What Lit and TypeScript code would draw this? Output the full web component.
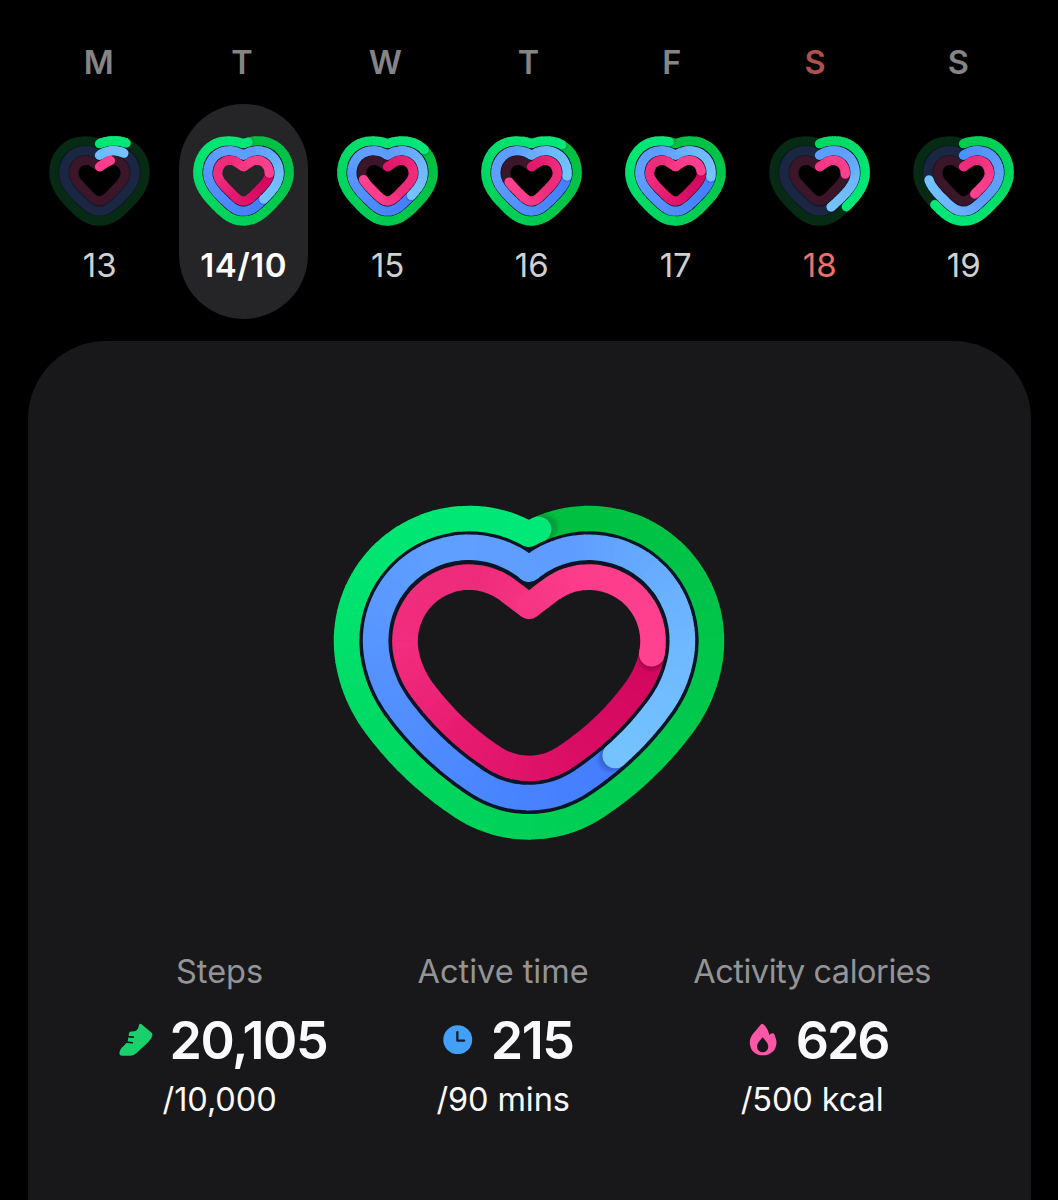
import { LitElement, html, css, svg } from "lit";
import { customElement, property } from "lit/decorators.js";
import { classMap } from "lit/directives/class-map.js";

type Rgb = [number, number, number];
interface Ring { head: number; lapped: boolean; }
interface Day { letter: string; date: string; rings: Ring[]; selected?: boolean; sunday?: boolean; }

const hex = (h: string): Rgb => [0, 2, 4].map((i) => parseInt(h.substr(i, 2), 16)) as Rgb;

/* colour stops from the tail of a lap to its head: steps, active time, calories */
const RAMPS: Rgb[][] = [
  ["00bf3f", "00c348", "00ca4e", "00d158", "00da64", "00e572", "00e878"].map(hex),
  ["447cff", "4a86ff", "5592ff", "5f9fff", "5e9dff", "6eb7ff", "74c3ff"].map(hex),
  ["d1065c", "da0d64", "e5196e", "f22c7e", "ee2c7b", "fd3d8c", "ff4190"].map(hex),
];
const TRACKS = ["#062a13", "#1b2742", "#3b1528"];

const ramp = (ring: number, t: number): string => {
  const stops = RAMPS[ring];
  const p = Math.max(0, Math.min(0.9999, t)) * (stops.length - 1);
  const i = Math.floor(p);
  const f = p - i;
  return `rgb(${stops[i].map((c, k) => Math.round(c + (stops[i + 1][k] - c) * f)).join(",")})`;
};

const LARGE = {
  box: "333 505 392 336",
  width: 25.6,
  gap: 7,
  overlap: 0.1,
  segments: 90,
  paths: [
    "M529 534.2A122.5 122.5 0 0 1 709.6 662.3A147.9 147.9 0 0 1 683.6 723.5A333.8 333.8 0 0 1 595.4 807.2A122 122 0 0 1 462.6 807.2A333.8 333.8 0 0 1 374.4 723.5A147.9 147.9 0 0 1 348.4 662.3A122.5 122.5 0 0 1 529 534.2Z",
    "M529 569.2A93.3 93.3 0 0 1 680.9 657.2A118.7 118.7 0 0 1 660 706.3A304.6 304.6 0 0 1 579.5 782.7A92.8 92.8 0 0 1 478.5 782.7A304.6 304.6 0 0 1 398 706.3A118.7 118.7 0 0 1 377.1 657.2A93.3 93.3 0 0 1 529 569.2Z",
    "M529 606.3L549.6 590.6A64.1 64.1 0 0 1 652.1 652.1A89.5 89.5 0 0 1 636.4 689.2A275.4 275.4 0 0 1 563.6 758.2A63.6 63.6 0 0 1 494.4 758.2A275.4 275.4 0 0 1 421.6 689.2A89.5 89.5 0 0 1 405.9 652.1A64.1 64.1 0 0 1 508.4 590.6Z",
  ],
};
const SMALL = {
  box: "0 0 101 90",
  width: 9.3,
  gap: 2.4,
  overlap: 0.3,
  segments: 40,
  paths: [
    "M50.5 7.7C55 5.8 60 4.8 65.5 4.8C83.5 4.8 96.2 19 96.2 36.5C96.2 52 85 63 75 73C66.5 81 60 85 50.5 85C41 85 34.5 81 26 73C16 63 4.8 52 4.8 36.5C4.8 19 17.5 4.8 35.5 4.8C41 4.8 46 5.8 50.5 7.7Z",
    "M50.5 19.3C55 16.3 59.5 14.7 64.5 14.7C77.5 14.7 86.2 25 86.2 37C86.2 48.5 77 57 67.2 66.5C61 72.5 56.5 75.2 50.5 75.2C44.5 75.2 40 72.5 33.8 66.5C24 57 14.8 48.5 14.8 37C14.8 25 23.5 14.7 36.5 14.7C41.5 14.7 46 16.3 50.5 19.3Z",
    "M50.5 30.8L57 26.5C59.5 24.9 61.5 24.3 64 24.3C71.5 24.3 76.3 30.5 76.3 37.5C76.3 44 70 49.8 60.5 59.2C56.5 63.2 54 65 50.5 65C47 65 44.5 63.2 40.5 59.2C31 49.8 24.7 44 24.7 37.5C24.7 30.5 29.5 24.3 37 24.3C39.5 24.3 41.5 24.9 44 26.5Z",
  ],
};

/* Three nested heart tracks, each filled clockwise from the notch. */
@customElement("heart-rings")
export class HeartRings extends LitElement {
  @property({ attribute: false }) rings: Ring[] = [];
  @property({ type: Boolean }) large = false;

  static styles = css`
    :host { display: block; }
    svg { display: block; width: 100%; height: 100%; overflow: visible; }
    path { fill: none; stroke-linejoin: round; }
    .round { stroke-linecap: round; }
    .backing { stroke: #0b1526; }
    .shade { stroke: #002; stroke-opacity: 0.05; stroke-linecap: round; }
  `;

  private dash(d: string, at: number, length: number, color: string, round = false) {
    return svg`<path class=${round ? "round" : ""} d=${d} pathLength="100"
      stroke=${color} stroke-dasharray="${length} 1000" stroke-dashoffset=${-at}></path>`;
  }

  private ring(r: Ring, i: number) {
    const shape = this.large ? LARGE : SMALL;
    const d = shape.paths[i];
    const n = shape.segments;
    const head = r.head * 100;
    const span = r.lapped ? 100 : head;
    const tail = head - span;
    const tone = (t: number) => (r.lapped ? t : 1 - (1 - t) * (span / 100));
    const parts = [];
    if (!r.lapped) {
      parts.push(svg`<path d=${d} stroke=${TRACKS[i]}></path>`);
      parts.push(this.dash(d, 0, 0.01, ramp(i, tone(0)), true));
    }
    const step = span / n;
    let notchDone = false;
    for (let k = 0; k < n; k++) {
      const from = tail + k * step;
      const color = ramp(i, tone((k + 0.5) / n));
      const len = step + (k < n - 1 ? shape.overlap : 0);
      if (r.lapped && !notchDone && from + step > 0) {
        notchDone = true;
        parts.push(this.dash(d, 0, 0.01, color, true));
      }
      if (from < 0) parts.push(this.dash(d, from + 100, Math.min(len, -from), color));
      if (from + len > 0) parts.push(this.dash(d, Math.max(0, from), from < 0 ? from + len : len, color));
    }
    if (r.lapped) {
      for (const ahead of [0.2, 0.4, 0.6, 0.8]) {
        parts.push(svg`<path class="shade" d=${d} pathLength="100"
          stroke-dasharray="0.01 1000" stroke-dashoffset=${-((head + ahead) % 100)}></path>`);
      }
    }
    parts.push(this.dash(d, head % 100, 0.01, ramp(i, 1), true));
    return svg`<g>${parts}</g>`;
  }

  render() {
    const shape = this.large ? LARGE : SMALL;
    return html`<svg viewBox=${shape.box} stroke-width=${shape.width} aria-hidden="true">
      <path class="backing" d=${shape.paths[1]} stroke-width=${shape.width + shape.gap}></path>
      ${this.rings.map((r, i) => this.ring(r, i))}
    </svg>`;
  }
}

const full = (head: number): Ring => ({ head, lapped: true });
const part = (head: number): Ring => ({ head, lapped: false });

const DAYS: Day[] = [
  { letter: "M", date: "13", rings: [part(0.1), part(0.122), part(0.085)] },
  { letter: "T", date: "14/10", rings: [full(0.018), full(0.385), full(0.235)], selected: true },
  { letter: "W", date: "15", rings: [full(0.145), full(0.36), part(0.72)] },
  { letter: "T", date: "16", rings: [full(0.115), full(0.25), part(0.7)] },
  { letter: "F", date: "17", rings: [full(0.975), full(0.255), full(0.22)] },
  { letter: "S", date: "18", rings: [part(0.385), part(0.44), part(0.24)], sunday: true },
  { letter: "S", date: "19", rings: [part(0.625), part(0.73), part(0.41)] },
];

const shoe = html`<svg class="icon shoe" viewBox="0 0 104 100">
  <path fill="#1ad06c" d="M9 99Q1 99 1 91Q2 79 14 70L26 56L30 31Q31 25 38 26Q58 26 60 8Q61 1 67 3L97 28Q103 33 100 40Q97 50 88 58L52 92Q45 99 35 99Z"/>
  <path stroke="#17171a" stroke-width="5" stroke-linecap="round" d="M20 41L43 43M16 57L40 60"/>
</svg>`;
const clock = html`<svg class="icon clock" viewBox="0 0 30 30">
  <circle cx="15" cy="15" r="14.7" fill="#429ffa"/>
  <path fill="none" stroke="#0b1c33" stroke-width="2.3" stroke-linecap="round" stroke-linejoin="round" d="M14.6 7.3V16H21.6"/>
</svg>`;
const flame = html`<svg class="icon flame" viewBox="0 0 84 100">
  <path fill="#fd57a5" d="M36 4Q39 1 43 4C52 12 58 22 61 36Q66 30 72 31Q76 31 77 36C80 44 83 50 83 58C83 82 65 98 42 98C18 98 2 82 2 58C2 36 22 24 36 4Z"/>
  <path fill="#17171a" d="M41 43C48 52 58 60 58 72A17 17 0 0 1 24 72C24 60 34 52 41 43Z"/>
</svg>`;

const STATS = [
  { label: "Steps", value: "20,105", goal: "/10,000", icon: shoe, cls: "steps" },
  { label: "Active time", value: "215", goal: "/90 mins", icon: clock, cls: "time" },
  { label: "Activity calories", value: "626", goal: "/500 kcal", icon: flame, cls: "calories" },
];

@customElement("app-root")
export class AppRoot extends LitElement {
  static styles = css`
    :host {
      display: flex; flex-direction: column; box-sizing: border-box;
      width: 1058px; height: 1200px; overflow: hidden; padding-top: 42px;
      background: #000; color: #fafafc;
      font-family: Inter, "Liberation Sans", sans-serif;
    }
    .letters { display: grid; grid-template-columns: repeat(7, 143.3px); margin-left: 27px; }
    .letter { text-align: center; font-size: 32.5px; line-height: 42px; font-weight: 600; color: #858586; }
    .letter.sunday { color: #ad524c; }
    .week { display: grid; grid-template-columns: repeat(7, 144px); margin: 20px 0 0 27.2px; justify-items: center; }
    .day {
      display: flex; flex-direction: column; align-items: center; box-sizing: border-box;
      width: 129px; height: 214.5px; padding-top: 32px; border-radius: 65px;
    }
    .day.selected { background: #252527; }
    .mini { width: 101px; height: 90px; }
    .date { margin-top: 19px; padding-left: 1px; font-size: 33px; line-height: 40px; color: #d0d0d1; }
    .selected .date { font-weight: 600; letter-spacing: 0.5px; color: #fff; }
    .sunday .date { color: #ee7068; }
    .panel {
      flex: 1; box-sizing: border-box; margin: 22.5px 27px 0 27.6px; padding-top: 164px;
      border-radius: 78px 78px 0 0; background: #18181a;
    }
    .hero { width: 392px; height: 336px; margin: 0 auto; }
    .stats { display: grid; grid-template-columns: 334px 233px 385px; margin: 110px 0 0 25px; }
    .stat { display: flex; flex-direction: column; align-items: center; white-space: nowrap; }
    .label { font-size: 32.5px; line-height: 42px; letter-spacing: -0.45px; color: #949496; }
    .steps .label, .time .label { letter-spacing: 0; }
    .row { display: flex; align-items: center; height: 60px; margin-top: 18px; }
    .value { font-size: 52px; line-height: 60px; font-weight: 600; letter-spacing: -1.4px; }
    .calories .value { letter-spacing: -2px; }
    .goal { font-size: 32.5px; line-height: 40px; margin-top: 9px; letter-spacing: -0.1px; }
    .icon { display: block; fill: none; position: relative; top: -1.5px; }
    .shoe { width: 34.5px; height: 33px; margin-right: 16px; }
    .clock { width: 29.5px; height: 29.5px; margin-right: 18px; }
    .flame { width: 28px; height: 33px; margin-right: 18.5px; }
    .steps .row { padding-left: 7px; }
    .time .row { padding-left: 10.5px; }
    .calories .row { padding-left: 13.5px; }
  `;

  render() {
    return html`
      <div class="letters">
        ${DAYS.map((d) => html`<div class=${classMap({ letter: true, sunday: !!d.sunday })}>${d.letter}</div>`)}
      </div>
      <div class="week">
        ${DAYS.map((d) => html`
          <div class=${classMap({ day: true, selected: !!d.selected, sunday: !!d.sunday })}>
            <heart-rings class="mini" .rings=${d.rings}></heart-rings>
            <div class="date">${d.date}</div>
          </div>`)}
      </div>
      <div class="panel">
        <heart-rings class="hero" large .rings=${[full(0.01), full(0.39), full(0.2535)]}></heart-rings>
        <div class="stats">
          ${STATS.map((s) => html`
            <div class="stat ${s.cls}">
              <div class="label">${s.label}</div>
              <div class="row">${s.icon}<span class="value">${s.value}</span></div>
              <div class="goal">${s.goal}</div>
            </div>`)}
        </div>
      </div>`;
  }
}
